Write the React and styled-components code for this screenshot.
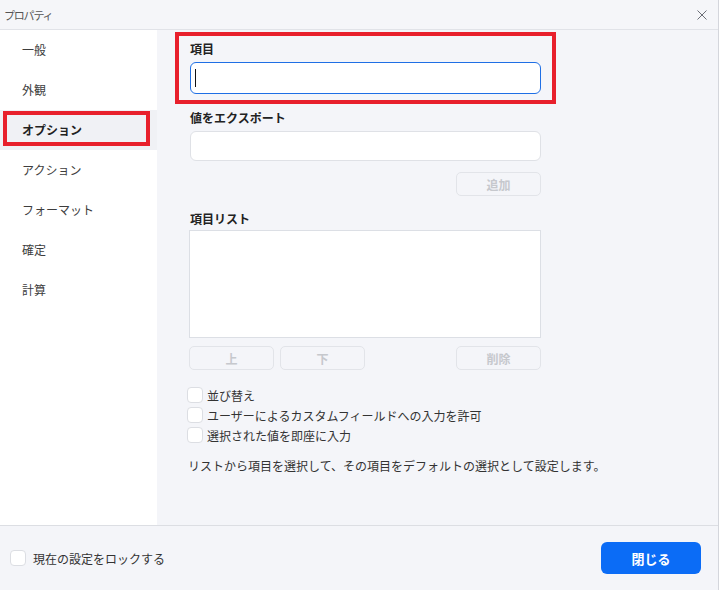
import React from 'react';
import styled, { createGlobalStyle } from 'styled-components';

const GlobalStyle = createGlobalStyle`
  html, body {
    margin: 0;
    padding: 0;
    background: #f4f5f9;
  }
  *, *::before, *::after {
    box-sizing: border-box;
  }
  body {
    font-family: "Noto Sans CJK JP", "Noto Sans", sans-serif;
    color: #333;
  }
`;

const Window = styled.div`
  width: 719px;
  height: 590px;
  display: flex;
  flex-direction: column;
  background: #f4f5f9;
  border-right: 1px solid #d4d6dc;
`;

const TitleBar = styled.div`
  height: 30px;
  flex: none;
  display: flex;
  align-items: center;
  justify-content: space-between;
  padding: 0 10px 0 4px;
  border-bottom: 1px solid #e1e3e8;
  background: #f5f6f9;
`;

const Title = styled.span`
  font-size: 11px;
  letter-spacing: -1.2px;
  color: #555;
`;

const CloseIcon = styled.svg`
  width: 12px;
  height: 12px;
  display: block;
`;

const Body = styled.div`
  flex: 1;
  display: flex;
  min-height: 0;
`;

const Sidebar = styled.nav`
  width: 157px;
  flex: none;
  background: #fff;
  display: flex;
  flex-direction: column;
`;

const NavItem = styled.div`
  position: relative;
  height: 40px;
  display: flex;
  align-items: center;
  padding: 0 0 1px 22px;
  font-size: 12px;
  font-weight: ${p => (p.$active ? 700 : 400)};
  color: ${p => (p.$active ? '#222' : '#3d3d3d')};
  background: ${p => (p.$active ? '#f0f1f5' : 'transparent')};

  &::after {
    content: '';
    display: ${p => (p.$marked ? 'block' : 'none')};
    position: absolute;
    left: 3px;
    top: 1px;
    width: 147px;
    height: 35px;
    border: 4px solid #e8202c;
  }
`;

const Main = styled.div`
  flex: 1;
  padding: 2px 0 0 18px;
  display: flex;
  flex-direction: column;
`;

const Section = styled.div`
  width: 381px;
  border: 4px solid ${p => (p.$marked ? '#e8202c' : 'transparent')};
  padding: ${p => p.$pt}px 11px ${p => p.$pb}px;
  display: flex;
  flex-direction: column;
`;

const Label = styled.div`
  font-size: 12px;
  font-weight: 700;
  line-height: 18px;
  color: #222;
  margin-bottom: ${p => p.$mb ?? 4}px;
`;

const Input = styled.div`
  height: ${p => (p.$focused ? 32 : 30)}px;
  background: #fff;
  border: 1px solid ${p => (p.$focused ? '#1f6fe5' : '#dfe1e6')};
  border-radius: 6px;
  display: flex;
  align-items: center;
  padding-left: 4px;
`;

const Caret = styled.span`
  width: 1px;
  height: 18px;
  background: #111;
`;

const ButtonRow = styled.div`
  display: flex;
  gap: 6px;
  justify-content: ${p => (p.$end ? 'flex-end' : 'flex-start')};
  margin: ${p => p.$top || 0}px 0 0 ${p => p.$left || 0}px;
`;

const Spacer = styled.div`
  flex: 1;
`;

const GhostButton = styled.button`
  width: 85px;
  height: 24px;
  border: 1px solid #e2e4e9;
  border-radius: 5px;
  background: transparent;
  font-family: inherit;
  font-size: 12px;
  font-weight: 700;
  color: #c6c8cd;
  padding: 0;
`;

const ListBox = styled.div`
  height: 108px;
  margin-left: -1px;
  background: #fff;
  border: 1px solid #dcdfe5;
`;

const Checks = styled.div`
  display: flex;
  flex-direction: column;
  margin: 11px 0 0 12px;
`;

const CheckRow = styled.label`
  height: 20px;
  display: flex;
  align-items: center;
  gap: ${p => p.$gap || 4}px;
  font-size: 12px;
  color: #333;
`;

const Box = styled.span`
  width: 16px;
  height: 16px;
  flex: none;
  background: #fff;
  border: 1px solid #dcdee3;
  border-radius: 4px;
`;

const Hint = styled.p`
  margin: 12px 0 0 13px;
  font-size: 12px;
  line-height: 18px;
  color: #333;
`;

const Footer = styled.div`
  height: 65px;
  flex: none;
  border-top: 1px solid #dcdee3;
  display: flex;
  align-items: center;
  justify-content: space-between;
  padding: 0 17px 0 10px;
  background: #f4f5f9;
`;

const PrimaryButton = styled.button`
  width: 100px;
  height: 32px;
  border: none;
  border-radius: 6px;
  background: #0b6cf6;
  color: #fff;
  font-family: inherit;
  font-size: 13px;
  font-weight: 700;
  padding: 0;
`;

const Nav = ['一般', '外観', 'オプション', 'アクション', 'フォーマット', '確定', '計算'];

export default function App() {
  return (
    <>
      <GlobalStyle />
      <Window>
        <TitleBar>
          <Title>プロパティ</Title>
          <CloseIcon viewBox="0 0 12 12">
            <path d="M1.5 1.5 L10.5 10.5 M10.5 1.5 L1.5 10.5" stroke="#6b6e76" strokeWidth="1" />
          </CloseIcon>
        </TitleBar>
        <Body>
          <Sidebar>
            {Nav.map(n => (
              <NavItem key={n} $active={n === 'オプション'} $marked={n === 'オプション'}>
                {n}
              </NavItem>
            ))}
          </Sidebar>
          <Main>
            <Section $marked $pt={4} $pb={6}>
              <Label>項目</Label>
              <Input $focused>
                <Caret />
              </Input>
            </Section>
            <Section $pt={1} $pb={0}>
              <Label>値をエクスポート</Label>
              <Input />
              <ButtonRow $end $top={11}>
                <GhostButton>追加</GhostButton>
              </ButtonRow>
            </Section>
            <Section $pt={6} $pb={0}>
              <Label $mb={2}>項目リスト</Label>
              <ListBox />
              <ButtonRow $top={8} $left={-1}>
                <GhostButton>上</GhostButton>
                <GhostButton>下</GhostButton>
                <Spacer />
                <GhostButton>削除</GhostButton>
              </ButtonRow>
            </Section>
            <Checks>
              <CheckRow><Box />並び替え</CheckRow>
              <CheckRow><Box />ユーザーによるカスタムフィールドへの入力を許可</CheckRow>
              <CheckRow><Box />選択された値を即座に入力</CheckRow>
            </Checks>
            <Hint>リストから項目を選択して、その項目をデフォルトの選択として設定します。</Hint>
          </Main>
        </Body>
        <Footer>
          <CheckRow $gap={7}><Box />現在の設定をロックする</CheckRow>
          <PrimaryButton>閉じる</PrimaryButton>
        </Footer>
      </Window>
    </>
  );
}
